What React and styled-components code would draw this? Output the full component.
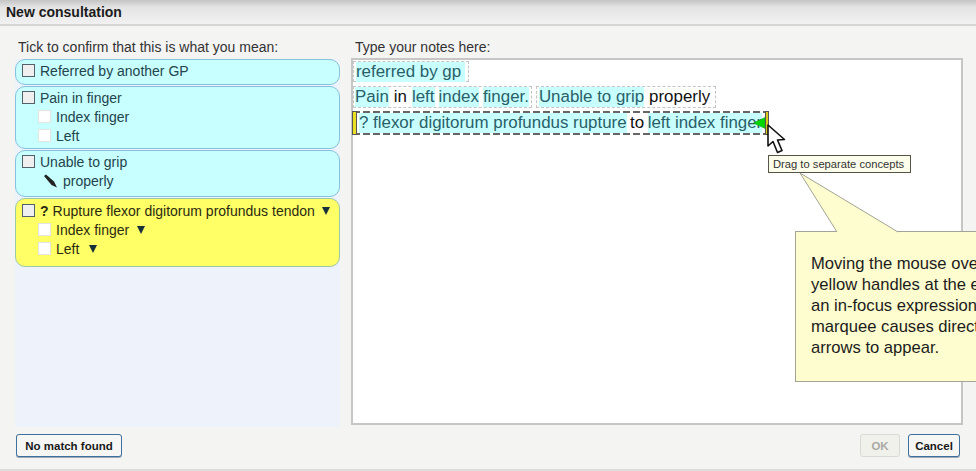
import React from "react"
import styled, { createGlobalStyle } from "styled-components"

const Global = createGlobalStyle`
  html, body { margin: 0; padding: 0; background: #f4f4f3; }
  body { font-family: "Liberation Sans", Arial, sans-serif; }
`

const Dialog = styled.div`
  position: relative;
  width: 976px;
  height: 471px;
  overflow: hidden;
  display: flex;
  flex-direction: column;
  background: #f4f4f3;
`
const Header = styled.div`
  height: 24px;
  padding-left: 6px;
  display: flex;
  align-items: center;
  flex-shrink: 0;
  font-size: 14px;
  font-weight: bold;
  color: #1c1c1c;
  background: linear-gradient(#c4c4c4 0, #e4e4e4 30%, #f1f1f1 100%);
  border-bottom: 2px solid #d6d6d6;
`
const Body = styled.div`
  flex: 1;
  display: grid;
  grid-template-columns: 325px 612px;
  column-gap: 11px;
  padding: 13px 14px 0 15px;
  min-height: 0;
`
const Column = styled.div`
  display: flex;
  flex-direction: column;
  min-height: 0;
`
const Label = styled.div`
  height: ${props => props.$h || 20}px;
  padding-left: ${props => props.$indent || 3}px;
  font-size: 14px;
  line-height: 17px;
  color: #333;
`
const ListPanel = styled.div`
  height: 368px;
  display: flex;
  flex-direction: column;
  gap: 1px;
  background: #eef3fb;
`
const Card = styled.div`
  padding: ${props => props.$pad || 1}px 6px 0;
  height: ${props => props.$h}px;
  box-sizing: border-box;
  border-radius: 10px;
  border: 1px solid ${props => (props.$yellow ? "#9cc8a8" : "#86c2dc")};
  background: ${props => (props.$yellow ? "#ffff66" : "#c8ffff")};
`
const Row = styled.div`
  height: 19px;
  display: flex;
  align-items: center;
  padding-left: ${props => (props.$sub ? 16 : 0)}px;
  font-size: 14px;
  white-space: nowrap;
  color: ${props => (props.$yellow ? "#2b2b10" : "#24444c")};
`
const Box = styled.span`
  width: 11px;
  height: 11px;
  margin-right: 5px;
  flex-shrink: 0;
  background: ${props => (props.$sub ? "#fff" : "#efefef")};
  border: 1px solid ${props => (props.$sub ? "#e2e6df" : "#52606c")};
`
const Query = styled.b`
  margin-right: 4px;
`
const Arrow = styled.span`
  width: 0;
  height: 0;
  margin-left: ${props => props.$gap}px;
  border-left: 4.5px solid transparent;
  border-right: 4.5px solid transparent;
  border-top: 8px solid #17303a;
`
const PencilIcon = styled.svg`
  margin: 0 5px 0 5px;
  flex-shrink: 0;
`
const NotesBox = styled.div`
  height: 362px;
  padding: 1px 0 0 0;
  background: #fff;
  border: 2px solid #c6c6c6;
`
const NoteLine = styled.div`
  display: flex;
  align-items: center;
  height: ${props => props.$h}px;
  margin-bottom: ${props => props.$mb}px;
  font-size: 16.9px;
  color: #111;
`
const Chip = styled.span`
  display: flex;
  align-items: center;
  gap: 4px;
  height: 100%;
  box-sizing: border-box;
  padding: 0 ${props => props.$right}px 0 ${props => props.$left}px;
  margin-right: ${props => props.$mr || 0}px;
  border: 1px dashed #c4c4c4;
`
const Marquee = styled.span`
  display: flex;
  align-items: center;
  gap: 3.5px;
  width: 412px;
  height: 100%;
  box-sizing: border-box;
  padding-left: 6px;
  background:
    repeating-linear-gradient(90deg, #666 0 7px, transparent 7px 10px) top / 100% 2px no-repeat,
    repeating-linear-gradient(90deg, #666 0 7px, transparent 7px 10px) bottom / 100% 2px no-repeat;
`
const Concept = styled.span`
  padding-right: ${props => props.$tail || 0}px;
  background: #c8ffff;
  color: #2a6068;
  white-space: nowrap;
`
const Plain = styled.span`
  padding: 0 ${props => props.$px || 0}px;
  white-space: nowrap;
`
const Footer = styled.div`
  height: 44px;
  flex-shrink: 0;
  display: flex;
  align-items: flex-start;
  padding: 7px 16px 0 16px;
  box-sizing: border-box;
  border-bottom: 2px solid #dcdcdc;
`
const Button = styled.button`
  height: 23px;
  width: ${props => props.$w}px;
  margin-left: ${props => props.$ml || "0"};
  padding: 0;
  font-family: "Liberation Sans", Arial, sans-serif;
  font-size: 11.5px;
  font-weight: bold;
  border-radius: 3px;
  color: ${props => (props.disabled ? "#a9a9a4" : "#1a1a1a")};
  background: ${props => (props.disabled ? "#f1f1ec" : "#f6f6f4")};
  border: 1px solid ${props => (props.disabled ? "#dadad4" : "#3f6f9c")};
  box-shadow: ${props => (props.disabled ? "none" : "0 1px 0 #9ab")};
`
const Handle = styled.span`
  position: absolute;
  top: 111px;
  left: ${props => props.$left}px;
  width: ${props => props.$w}px;
  height: 24px;
  background: ${props => props.$fill};
  border: 1px solid #555;
  box-sizing: border-box;
`
const Overlay = styled.svg`
  position: absolute;
  left: ${props => props.$left}px;
  top: ${props => props.$top}px;
`
const Tooltip = styled.div`
  position: absolute;
  left: 768px;
  top: 155px;
  width: 143px;
  height: 18px;
  box-sizing: border-box;
  padding-left: 4px;
  display: flex;
  align-items: center;
  background: #fdfdeb;
  border: 1px solid #55554a;
  font-size: 11.2px;
  color: #333;
  white-space: nowrap;
`
const Callout = styled.div`
  position: absolute;
  left: 795px;
  top: 231px;
  width: 240px;
  height: 151px;
  box-sizing: border-box;
  padding: 21px 0 0 15px;
  background: #fefdcf;
  border: 1px solid #a3a398;
  font-size: 16.6px;
  line-height: 21px;
  color: #1c1c1c;
  white-space: nowrap;
`

function Item({ children, sub, yellow, after }) {
  return (
    <Row $sub={sub} $yellow={yellow}>
      <Box $sub={sub} />
      {children}
      {after}
    </Row>
  )
}

export default function App() {
  return (
    <Dialog>
      <Global />
      <Header>New consultation</Header>
      <Body>
        <Column>
          <Label>Tick to confirm that this is what you mean:</Label>
          <ListPanel>
            <Card $h={26}>
              <Item>Referred by another GP</Item>
            </Card>
            <Card $h={63}>
              <Item>Pain in finger</Item>
              <Item sub>Index finger</Item>
              <Item sub>Left</Item>
            </Card>
            <Card $h={47}>
              <Item>Unable to grip</Item>
              <Row $sub>
                <PencilIcon width="15" height="14" viewBox="0 0 15 14">
                  <path d="M1 2 L3 0.5 L11 7.5 L14 13.5 L8.5 11 Z" fill="#222" />
                </PencilIcon>
                properly
              </Row>
            </Card>
            <Card $h={69} $yellow $pad={2}>
              <Item yellow after={<Arrow $gap={7} />}>
                <Query>?</Query>Rupture flexor digitorum profundus tendon
              </Item>
              <Item sub yellow after={<Arrow $gap={8} />}>Index finger</Item>
              <Item sub yellow after={<Arrow $gap={10} />}>Left</Item>
            </Card>
          </ListPanel>
        </Column>
        <Column>
          <Label $h={19} $indent={4}>Type your notes here:</Label>
          <NotesBox>
            <NoteLine $h={21} $mb={4}>
              <Chip $left={2} $right={3}>
                <Concept $tail={4}>referred by gp</Concept>
              </Chip>
            </NoteLine>
            <NoteLine $h={22} $mb={3}>
              <Chip $left={1} $right={2} $mr={4}>
                <Concept>Pain</Concept>
                <Plain $px={1}>in</Plain>
                <Concept>left</Concept>
                <Concept>index</Concept>
                <Concept>finger.</Concept>
              </Chip>
              <Chip $left={2} $right={4}>
                <Concept>Unable to grip</Concept>
                <Plain $px={1}>properly</Plain>
              </Chip>
            </NoteLine>
            <NoteLine $h={24} $mb={0}>
              <Marquee>
                <Concept>? flexor digitorum profundus rupture</Concept>
                <Plain>to</Plain>
                <Concept>left index finger</Concept>
              </Marquee>
            </NoteLine>
          </NotesBox>
        </Column>
      </Body>
      <Footer>
        <Button $w={106}>No match found</Button>
        <Button $w={40} $ml="auto" disabled>OK</Button>
        <Button $w={52} $ml="8px">Cancel</Button>
      </Footer>

      <Handle $left={352} $w={5} $fill="#e8e020" />
      <Handle $left={765} $w={4} $fill="#d8c81c" />
      <Overlay $left={753} $top={117} width="12" height="12" viewBox="0 0 12 12">
        <path d="M0.5 6 L12 0.5 L12 11.5 Z" fill="#00d800" stroke="#0a9a0a" strokeWidth="0.5" />
      </Overlay>
      <Overlay $left={766} $top={123} width="22" height="32" viewBox="0 0 22 32">
        <path d="M2 2 L2 23 L7 18.5 L11.5 29.5 L16 27.5 L11.5 17 L18.5 16.5 Z" fill="#fff" stroke="#111" strokeWidth="1.6" strokeLinejoin="round" />
      </Overlay>
      <Callout>
        Moving the mouse over the
        <br />
        yellow handles at the ends of
        <br />
        an in-focus expression
        <br />
        marquee causes directional
        <br />
        arrows to appear.
      </Callout>
      <Overlay $left={795} $top={170} width="106" height="63" viewBox="0 0 106 63">
        <path d="M42 62 L5 3 L103 62" fill="#fefdcf" stroke="#a3a398" strokeWidth="1" />
      </Overlay>
      <Tooltip>Drag to separate concepts</Tooltip>
    </Dialog>
  )
}
